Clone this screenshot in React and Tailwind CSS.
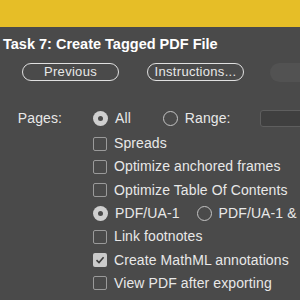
import React from 'react'

const font = { fontFamily: '"Liberation Sans", Arial, sans-serif' }

function Radio({ on }) {
  return on ? (
    <span className="flex h-[15px] w-[15px] shrink-0 items-center justify-center rounded-full bg-[#cfcfcf]">
      <span className="h-[5px] w-[5px] rounded-full bg-[#4a4a4a]" />
    </span>
  ) : (
    <span className="block h-[15px] w-[15px] shrink-0 rounded-full border-[1.5px] border-[#c4c4c4]" />
  )
}

function Check({ on }) {
  return on ? (
    <span className="flex h-[14px] w-[14px] shrink-0 items-center justify-center rounded-[2px] bg-[#cbcbcb]">
      <svg width="10" height="10" viewBox="0 0 10 10">
        <path d="M1.5 5.2 L4 7.6 L8.6 2.2" fill="none" stroke="#3c3c3c" strokeWidth="1.6" />
      </svg>
    </span>
  ) : (
    <span className="block h-[14px] w-[14px] shrink-0 rounded-[2px] border-[1.5px] border-[#9a9a9a]" />
  )
}

function Row({ children }) {
  return <div className="flex h-[23.3px] items-center gap-[7px] pl-[93px]">{children}</div>
}

export default function App() {
  return (
    <div className="h-[300px] w-[300px] overflow-hidden bg-[#4a4a4a] text-[#e8e8e8]" style={font}>
      {/* header strip */}
      <div className="h-[27px] bg-[#e6be27]" />

      <div className="pl-[3px] pt-[9px] text-[14.5px] font-bold leading-[17px] text-white whitespace-nowrap">
        Task 7: Create Tagged PDF File
      </div>

      {/* buttons */}
      <div className="mt-[10px] flex h-[18px] items-center pl-[22px]">
        <button className="flex h-[18px] w-[97px] shrink-0 items-center justify-center rounded-full border-[1.5px] border-[#e0e0e0] text-[13px] tracking-[0.3px] text-[#e8e8e8]">
          Previous
        </button>
        <button className="ml-[28px] flex h-[18px] w-[97px] shrink-0 items-center justify-center rounded-full border-[1.5px] border-[#e0e0e0] text-[13px] tracking-[0.3px] text-[#e8e8e8]">
          Instructions...
        </button>
        <div className="ml-[26px] h-[19px] w-[60px] shrink-0 rounded-full bg-[#525252]" />
      </div>

      <div className="mt-[24px] text-[14px] tracking-[0.1px] whitespace-nowrap">
        <div className="flex h-[27px] items-center">
          <span className="w-[62px] shrink-0 text-right">Pages:</span>
          <span className="ml-[31px] shrink-0"><Radio on /></span>
          <span className="ml-[7px] shrink-0">All</span>
          <span className="ml-[32px] shrink-0"><Radio /></span>
          <span className="ml-[7px] shrink-0">Range:</span>
          <span className="ml-[29px] h-[17px] w-[60px] shrink-0 rounded-[3px] border border-[#5e5e5e] bg-[#3f3f3f]" />
        </div>
        <Row><Check />Spreads</Row>
        <Row><Check />Optimize anchored frames</Row>
        <Row><Check />Optimize Table Of Contents</Row>
        <div className="flex h-[23.3px] items-center pl-[93px]">
          <Radio on />
          <span className="ml-[7px] shrink-0">PDF/UA-1</span>
          <span className="ml-[17px] shrink-0"><Radio /></span>
          <span className="ml-[7px] shrink-0">PDF/UA-1 &amp; PDF/UA-2</span>
        </div>
        <Row><Check />Link footnotes</Row>
        <Row><Check on />Create MathML annotations</Row>
        <Row><Check />View PDF after exporting</Row>
      </div>
    </div>
  )
}
